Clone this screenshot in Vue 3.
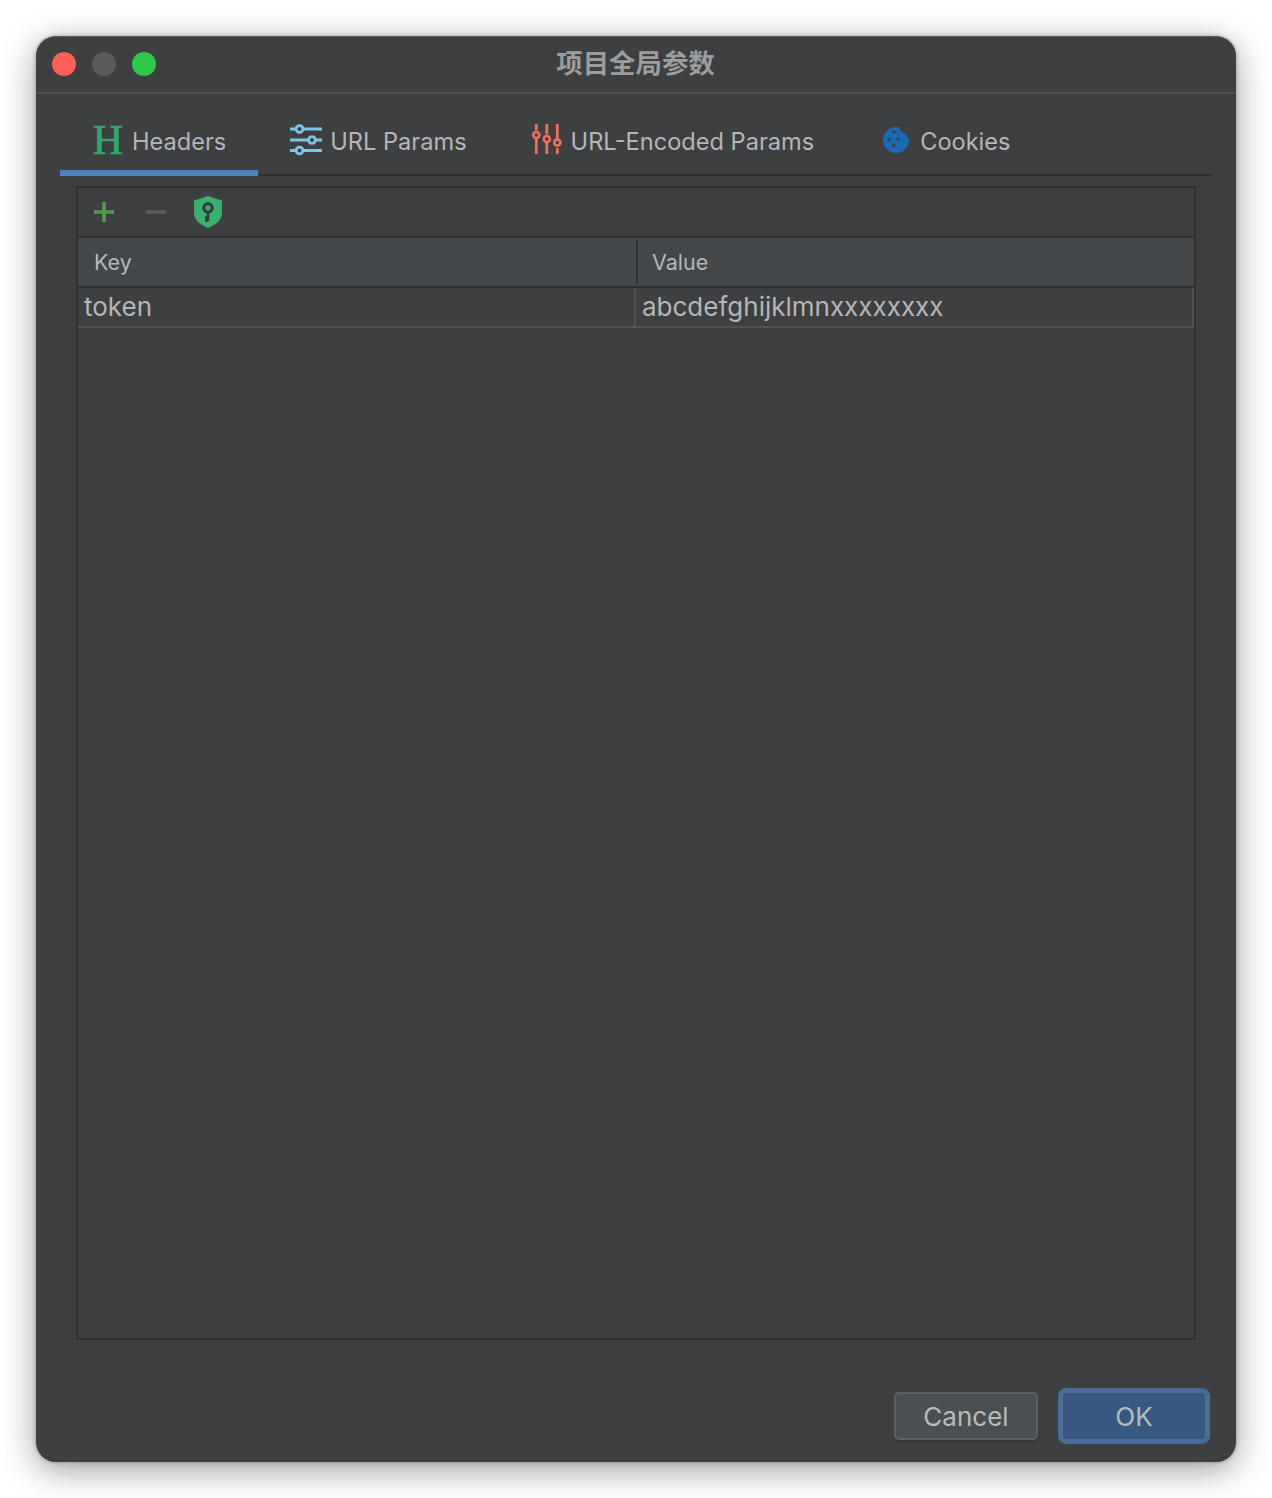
<script setup>
const tabs = [
  { id: 'h', label: 'Headers', active: true },
  { id: 'u', label: 'URL Params' },
  { id: 'e', label: 'URL-Encoded Params' },
  { id: 'c', label: 'Cookies' },
]
</script>

<template>
  <div class="page">
    <div class="window">
      <header class="titlebar">
        <div class="lights">
          <span class="light red"></span>
          <span class="light gray"></span>
          <span class="light green"></span>
        </div>
        <div class="title">项目全局参数</div>
      </header>

      <nav class="tabs">
        <div v-for="t in tabs" :key="t.id" class="tab" :class="{ active: t.active }">
          <span v-if="t.id === 'h'" class="h-icon">H</span>
          <svg v-else-if="t.id === 'u'" class="icon" viewBox="0 0 32 32" fill="none" stroke="#7cc6e8">
            <path d="M0 5h32M0 16h32M0 26.500h32" stroke-width="2.800" />
            <circle cx="9.500" cy="5" r="3.400" fill="#3e3f41" stroke-width="2.800" />
            <circle cx="22" cy="16" r="3.400" fill="#3e3f41" stroke-width="2.800" />
            <circle cx="9.500" cy="26.500" r="3.400" fill="#3e3f41" stroke-width="2.800" />
          </svg>
          <svg v-else-if="t.id === 'e'" class="icon" viewBox="0 0 32 32" fill="none" stroke="#f0705f">
            <path d="M5.300 0v6M5.300 14v16M15.800 0v10M15.800 19v11M26.300 0v14M26.300 24v6" stroke-width="2.800" />
            <circle cx="5.300" cy="11" r="3.100" fill="#3e3f41" stroke-width="2.600" />
            <circle cx="15.800" cy="15" r="3.100" fill="#3e3f41" stroke-width="2.600" />
            <circle cx="26.300" cy="18.500" r="3.100" fill="#3e3f41" stroke-width="2.600" />
          </svg>
          <svg v-else class="icon" viewBox="0 0 32 32">
            <circle cx="16" cy="16" r="13" fill="#1a69b5" />
            <circle cx="24" cy="4" r="4.500" fill="#3e3f41" />
            <circle cx="30" cy="10.500" r="3.500" fill="#3e3f41" />
            <circle cx="25.500" cy="8" r="2.500" fill="#3e3f41" />
            <g fill="#34414f">
              <circle cx="14" cy="8" r="1.800" />
              <circle cx="9" cy="15.500" r="1.800" />
              <circle cx="18" cy="15" r="1.800" />
              <circle cx="13.500" cy="21.500" r="1.800" />
            </g>
          </svg>
          <span class="tab-label">{{ t.label }}</span>
        </div>
      </nav>

      <section class="panel">
        <div class="toolbar">
          <svg class="tool" viewBox="0 0 20 20"><path d="M10 0v20M0 10h20" stroke="#4d9c52" stroke-width="3.500" /></svg>
          <svg class="tool" viewBox="0 0 20 20"><path d="M0 10h20" stroke="#5a5c5e" stroke-width="3.500" /></svg>
          <svg class="shield" viewBox="0 0 28 32">
            <path d="M14 0 28 4.500V17c0 6.500-5.500 11.500-14 15C5.500 28.500 0 23.500 0 17V4.500z" fill="#3bb06e" />
            <circle cx="14" cy="12" r="4.200" fill="none" stroke="#34393a" stroke-width="3" />
            <path d="M14 16v9M14 21.500h-3M14 24.500h-3" stroke="#34393a" stroke-width="2.600" />
          </svg>
        </div>
        <div class="thead">
          <div class="th key">Key</div>
          <div class="th val">Value</div>
        </div>
        <div class="row">
          <div class="td key">token</div>
          <div class="td val">abcdefghijklmnxxxxxxxx</div>
        </div>
      </section>

      <footer class="footer">
        <button class="btn cancel">Cancel</button>
        <button class="btn ok">OK</button>
      </footer>
    </div>
  </div>
</template>

<style>
html, body { margin: 0; background: #fff; }
</style>

<style scoped>
.page {
  width: 1272px;
  height: 1498px;
  box-sizing: border-box;
  padding: 36px;
  overflow: hidden;
  font-family: Inter, "Liberation Sans", "Noto Sans CJK SC", sans-serif;
}
.window {
  height: 1426px;
  display: flex;
  flex-direction: column;
  background: #3e3f41;
  border-radius: 20px;
  box-shadow: 0 8px 34px rgba(0, 0, 0, 0.38), 0 0 4px rgba(0, 0, 0, 0.3);
  border-top: 1px solid #5a5b5d;
  box-sizing: border-box;
}
.titlebar {
  height: 55px;
  flex: none;
  position: relative;
  display: flex;
  align-items: center;
  justify-content: center;
  border-bottom: 2px solid #4d4e50;
}
.lights {
  position: absolute;
  left: 16px;
  top: 15px;
  display: flex;
  gap: 16px;
}
.light { width: 24px; height: 24px; border-radius: 50%; }
.red { background: #fe5f57; }
.gray { background: #59595b; }
.green { background: #31c74a; }
.title {
  font-family: "Noto Sans CJK SC", sans-serif;
  font-weight: 700;
  font-size: 26.400px;
  line-height: 54px;
  padding-bottom: 6px;
  margin-left: -1px;
  color: #9c9d9e;
}
.tabs {
  flex: none;
  height: 80px;
  margin: 0 24px;
  display: flex;
  border-bottom: 2px solid #303132;
}
.tab {
  height: 82px;
  box-sizing: border-box;
  padding: 12px 32px 0;
  display: flex;
  align-items: center;
  gap: 8px;
  position: relative;
  color: #b4b6b7;
  font-size: 23.600px;
}
.tab:last-child { padding-left: 34px; }
.tab.active::after {
  content: "";
  position: absolute;
  left: 0;
  right: 0;
  bottom: 0;
  height: 6px;
  background: #4a82c3;
}
.h-icon {
  width: 32px;
  margin-top: -2px;
  text-align: center;
  font-family: "Liberation Serif", serif;
  font-size: 42px;
  line-height: 32px;
  color: #35a56e;
  -webkit-text-stroke: 0.7px #35a56e;
}
.icon { width: 32px; height: 32px; flex: none; margin-top: -2px; }
.panel {
  flex: 1;
  margin: 10px 40px 0;
  border: 2px solid #303132;
  color: #b4b6b7;
}
.toolbar {
  height: 50px;
  box-sizing: border-box;
  border-bottom: 2px solid #303132;
  padding-left: 16px;
  display: flex;
  align-items: center;
  gap: 32px;
}
.tool { width: 20px; height: 20px; flex: none; }
.shield { width: 28px; height: 32px; flex: none; margin-left: -4px; }
.thead {
  height: 50px;
  box-sizing: border-box;
  display: flex;
  background: #43474a;
  border-bottom: 2px solid #303132;
}
.th {
  font-size: 21.500px;
  line-height: 48px;
  padding-left: 16px;
  box-sizing: border-box;
}
.th.key { width: 560px; position: relative; }
.th.key::after {
  content: "";
  position: absolute;
  right: 0;
  top: 2px;
  bottom: 2px;
  width: 2px;
  background: #303132;
}
.th.val { flex: 1; padding-left: 14px; }
.row {
  height: 40px;
  box-sizing: border-box;
  display: flex;
  border-bottom: 2px solid #515254;
  border-right: 2px solid #515254;
}
.td {
  font-size: 26px;
  line-height: 38px;
  padding-left: 6px;
  box-sizing: border-box;
}
.td.key { width: 558px; border-right: 2px solid #515254; }
.td.val { flex: 1; }
.footer {
  flex: none;
  height: 122px;
  box-sizing: border-box;
  display: flex;
  justify-content: flex-end;
  align-items: flex-start;
  gap: 20px;
  padding: 52px 26px 0 0;
}
.btn {
  font-family: inherit;
  font-size: 26px;
  color: #b8babb;
  box-sizing: border-box;
  padding: 0;
}
.cancel {
  width: 144px;
  height: 48px;
  background: #4b4f51;
  border: 2px solid #5d5f60;
  border-radius: 5px;
  box-shadow: 0 2px 2px rgba(0, 0, 0, 0.15);
}
.ok {
  width: 152px;
  height: 56px;
  margin-top: -4px;
  background: #375880;
  border: 2px solid #466c97;
  border-radius: 8px;
  box-shadow: inset 0 0 0 3px #4a6f99;
}
</style>
